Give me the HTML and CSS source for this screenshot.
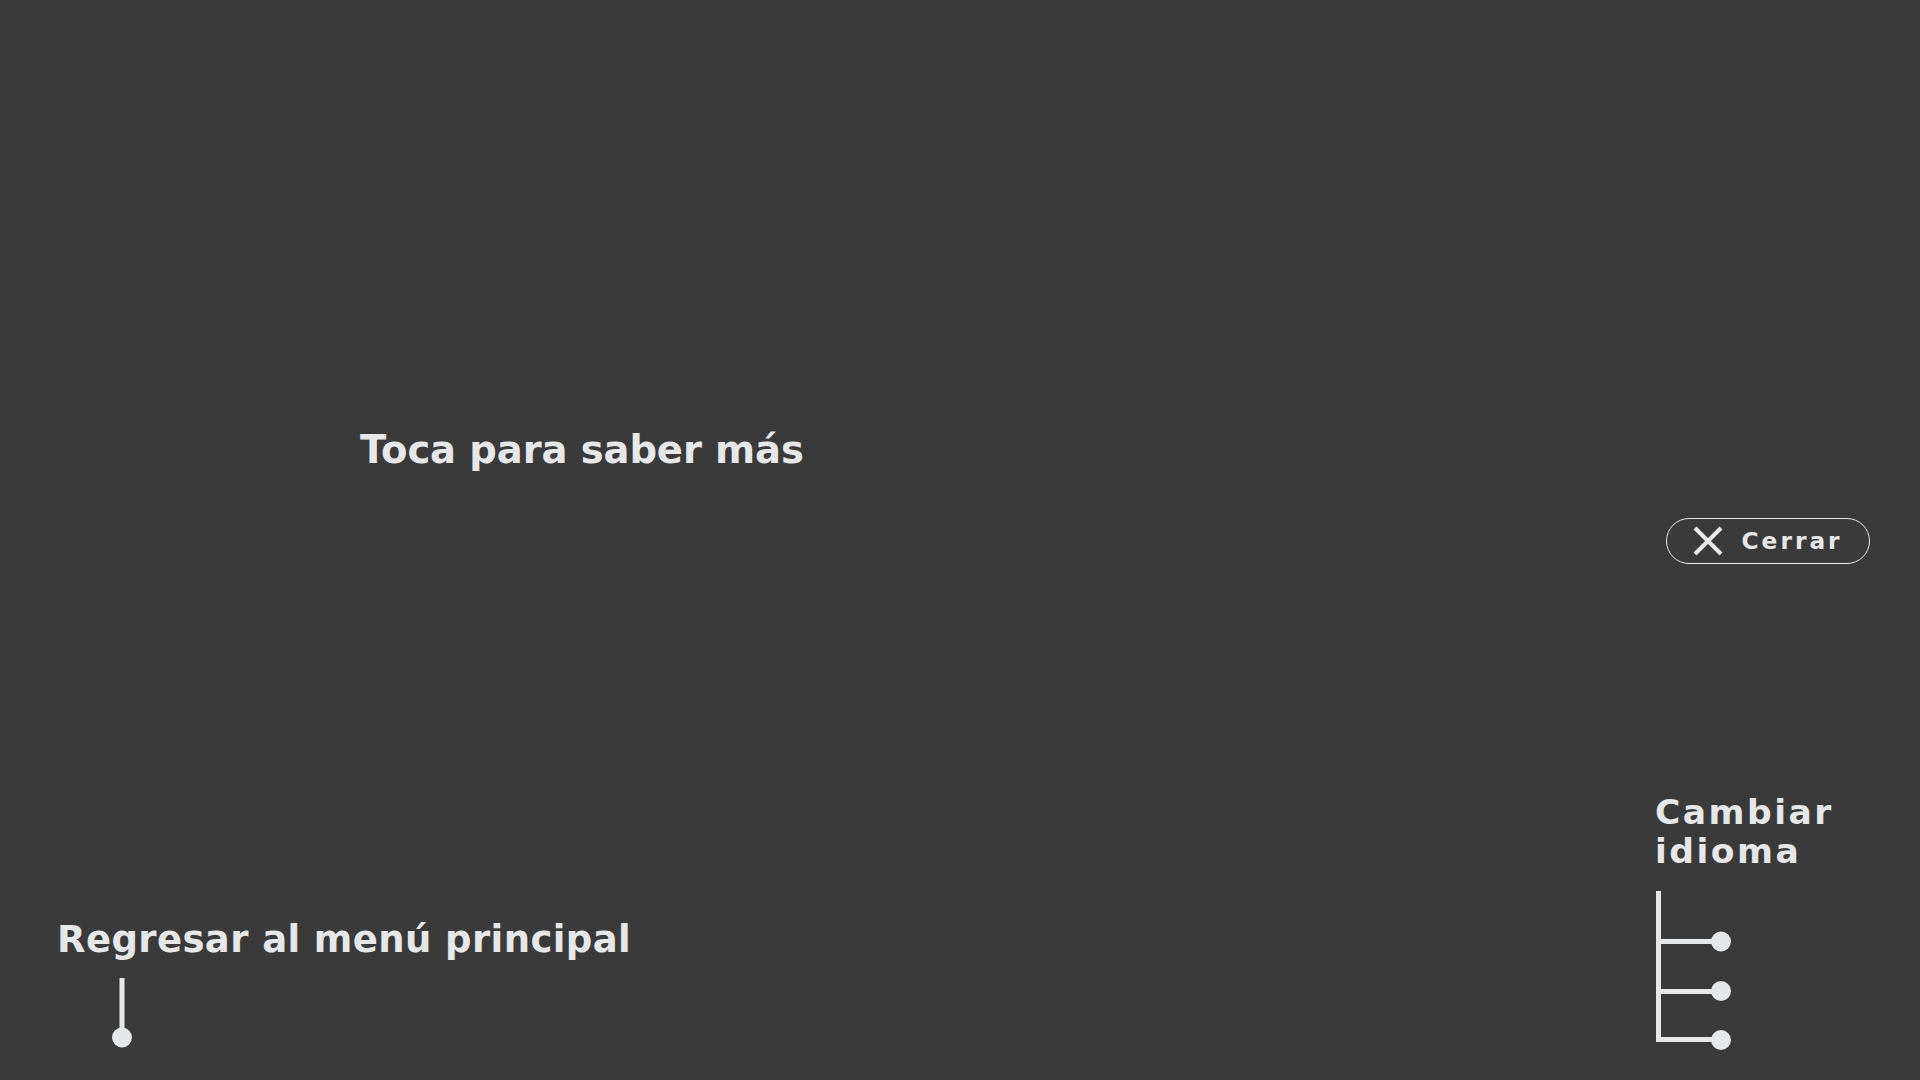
FILE: index.html
```html
<!DOCTYPE html>
<html lang="es">
<head>
<meta charset="utf-8">
<title>Toca para saber más</title>
<link rel="stylesheet" href="styles.css">
</head>
<body>
<div class="screen">
  <p class="hint">Toca para saber más</p>
  <div class="close-row">
    <button class="close-btn" type="button">
      <svg class="close-icon" width="30" height="30" viewBox="0 0 30 30" aria-hidden="true">
        <path d="M2 2 L28 28 M28 2 L2 28" stroke="#e6e7e8" stroke-width="4" fill="none"/>
      </svg>
      <span class="close-label">Cerrar</span>
    </button>
  </div>
  <div class="footer">
    <div class="back">
      <p class="back-label">Regresar al menú principal</p>
      <svg class="back-line" width="20" height="70" viewBox="0 0 20 70" aria-hidden="true">
        <rect x="7.5" y="0" width="5" height="60" fill="#e6e7e8"/>
        <circle cx="10" cy="59.5" r="10" fill="#e6e7e8"/>
      </svg>
    </div>
    <div class="lang">
      <p class="lang-label">Cambiar<br>idioma</p>
      <svg class="lang-tree" width="80" height="160" viewBox="0 0 80 160" aria-hidden="true">
        <rect x="1" y="0" width="5" height="151" fill="#e6e7e8"/>
        <rect x="1" y="48" width="65" height="5" fill="#e6e7e8"/>
        <rect x="1" y="98" width="65" height="5" fill="#e6e7e8"/>
        <rect x="1" y="146" width="65" height="5" fill="#e6e7e8"/>
        <circle cx="66" cy="50.5" r="10" fill="#e6e7e8"/>
        <circle cx="66" cy="100" r="10" fill="#e6e7e8"/>
        <circle cx="66" cy="149" r="10" fill="#e6e7e8"/>
      </svg>
    </div>
  </div>
</div>
</body>
</html>
```

FILE: styles.css
```css
html, body {
  margin: 0;
  padding: 0;
  background: #3a3a3a;
}

body {
  font-family: "DejaVu Sans", "Open Sans", sans-serif;
  color: #e6e7e8;
}

.screen {
  width: 1920px;
  height: 1080px;
  box-sizing: border-box;
  padding: 0 50px 29px 57px;
  display: flex;
  flex-direction: column;
}

.hint {
  margin: 431px 0 0 303px;
  font-size: 38.5px;
  line-height: 38.5px;
  font-weight: 700;
  letter-spacing: -0.1px;
}

.close-row {
  display: flex;
  justify-content: flex-end;
  margin-top: 48px;
}

.close-btn {
  width: 204px;
  height: 46px;
  box-sizing: border-box;
  border: 1.5px solid #e6e7e8;
  border-radius: 23px;
  background: transparent;
  color: #e6e7e8;
  display: flex;
  align-items: center;
  padding: 0 0 0 25.5px;
  gap: 19px;
  font-family: inherit;
  cursor: pointer;
}

.close-icon {
  display: block;
  flex: none;
}

.close-label {
  font-size: 23.3px;
  font-weight: 700;
  letter-spacing: 3px;
  line-height: 23.3px;
}

.footer {
  margin-top: auto;
  display: flex;
  justify-content: space-between;
  align-items: flex-end;
}

.back {
  display: flex;
  flex-direction: column;
  margin-bottom: 3.5px;
}

.back-label {
  margin: 0;
  font-size: 37px;
  line-height: 37px;
  font-weight: 700;
  letter-spacing: 0.4px;
}

.back-line {
  display: block;
  margin: 20px 0 0 54.5px;
}

.lang {
  width: 215px;
  display: flex;
  flex-direction: column;
}

.lang-label {
  margin: 0;
  font-size: 34.5px;
  line-height: 39px;
  font-weight: 700;
  letter-spacing: 2.5px;
}

.lang-tree {
  display: block;
  margin-top: 20px;
}
```
